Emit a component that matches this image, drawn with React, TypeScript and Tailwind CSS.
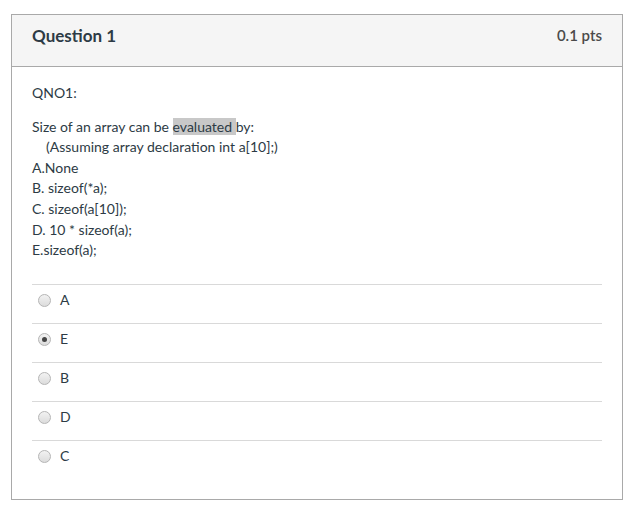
const answers = [
  { label: "A", checked: false },
  { label: "E", checked: true },
  { label: "B", checked: false },
  { label: "D", checked: false },
  { label: "C", checked: false },
];

function Radio({ checked }: { checked: boolean }) {
  return (
    <span className="flex h-[13px] w-[13px] items-center justify-center rounded-full border border-[#b5b5b5] bg-gradient-to-b from-[#f2f2f2] to-[#dcdcdc]">
      {checked && <span className="h-[5px] w-[5px] rounded-full bg-[#444]" />}
    </span>
  );
}

export default function App() {
  return (
    <div className="min-h-screen bg-white pl-[11px] pt-[14px] font-['Lato','Liberation_Sans',sans-serif] text-[#2d3b45]">
      <div className="w-[612px] border border-[#a9a9a9]">
        <div className="flex h-[52px] items-start justify-between border-b border-[#a9a9a9] bg-[#f5f5f5] px-5 pt-[10px]">
          <span className="text-[17px] font-bold leading-[21px]">Question 1</span>
          <span className="text-[15px] font-semibold leading-[20px] text-[#4a4a4a]">0.1 pts</span>
        </div>
        <div className="px-5 pb-5 pt-4 text-[14px] leading-[20.6px]">
          <p>QNO1:</p>
          <p className="mt-[13px]">
            Size of an array can be <span className="bg-[#c8c8c8]">evaluated </span>by:
          </p>
          <p className="pl-[14px]">(Assuming array declaration int a[10];)</p>
          <p>A.None</p>
          <p>B. sizeof(*a);</p>
          <p>C. sizeof(a[10]);</p>
          <p>D. 10 * sizeof(a);</p>
          <p>E.sizeof(a);</p>
          <div className="mt-[23px]">
            {answers.map((a) => (
              <div key={a.label} className="h-[39px] border-t border-[#d9d9d9] pl-[6px] pt-[5px]">
                <div className="flex items-center gap-[9px]">
                  <Radio checked={a.checked} />
                  <span>{a.label}</span>
                </div>
              </div>
            ))}
          </div>
        </div>
      </div>
    </div>
  );
}
